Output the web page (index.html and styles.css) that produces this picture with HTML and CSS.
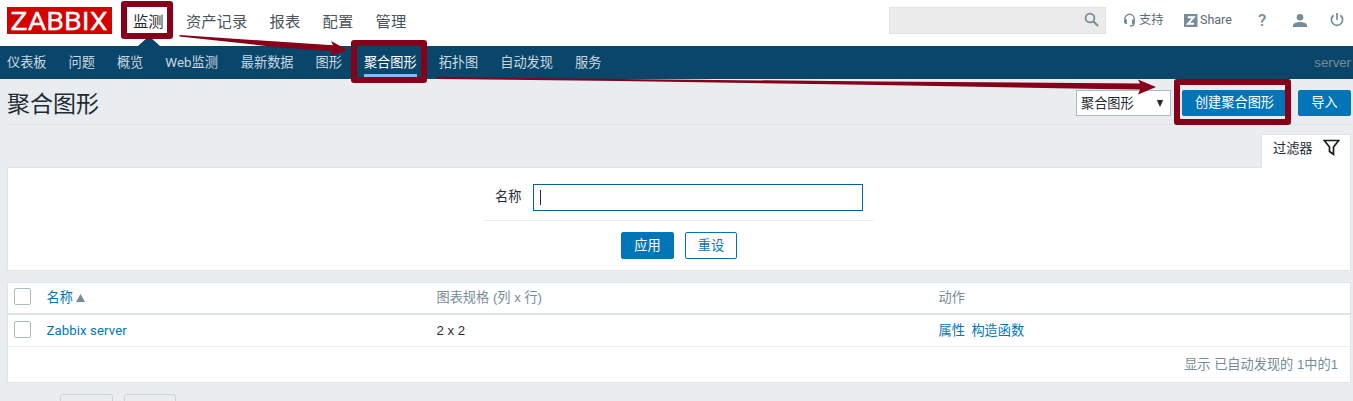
FILE: index.html
```html
<!DOCTYPE html>
<html lang="zh-CN">
<head>
<meta charset="utf-8">
<title>Zabbix</title>
<link rel="stylesheet" href="styles.css">
</head>
<body>
<header class="top">
  <svg class="logo" width="105" height="27" viewBox="0 0 105 27"><rect width="105" height="27" fill="#d40000"/><text class="logo-text" x="3.5" y="22.500" textLength="97" lengthAdjust="spacingAndGlyphs">ZABBIX</text></svg>
  <nav class="main-nav"><a class="current">监测</a><a>资产记录</a><a>报表</a><a>配置</a><a>管理</a></nav>
  <div class="search">
    <svg width="16" height="16" viewBox="0 0 16 16" fill="none" stroke="#768d99"><circle cx="6" cy="6" r="4.4" stroke-width="1.8"/><path d="M9.200 9.200l4.800 4.800" stroke-width="2"/></svg>
  </div>
  <div class="tools">
    <a class="support"><svg width="13" height="14" viewBox="0 0 13 14"><path d="M1.800 9V6a4.700 4.700 0 0 1 9.400 0v3.500q0 3.500-4.200 3.500" fill="none" stroke="#768d99" stroke-width="1.5"/><path d="M1 6.500h3v4.500H2.500L1 9.500zM9 6.500h3v3l-1.500 1.500H9z" fill="#768d99"/></svg>支持</a>
    <a class="share"><svg width="14" height="13" viewBox="0 0 14 13"><rect width="13.500" height="13" fill="#768d99"/><path d="M3.700 3.300h6L4 9.700h6" fill="none" stroke="#fff" stroke-width="1.900"/></svg>Share</a>
    <a class="help">?</a>
    <a class="user"><svg width="14" height="13" viewBox="0 0 14 13" fill="#768d99"><circle cx="7" cy="3.300" r="3.300"/><path d="M0 13v-1.700C0 9 4 7.900 7 7.900s7 1.100 7 3.400V13z"/></svg></a>
    <a class="power"><svg width="14" height="14" viewBox="0 0 14 14" fill="none" stroke="#768d99" stroke-width="1.700"><path d="M7 0v7M3.600 2.300a5.600 5.600 0 1 0 6.800 0"/></svg></a>
  </div>
</header>
<nav class="sub-nav">
  <a>仪表板</a><a>问题</a><a>概览</a><a class="web">Web监测</a><a>最新数据</a><a>图形</a><a class="selected">聚合图形</a><a>拓扑图</a><a>自动发现</a><a>服务</a>
  <span class="server">server</span>
</nav>
<main>
  <div class="title-row">
    <h1>聚合图形</h1>
    <div class="select"><span>聚合图形</span><svg width="8" height="8" viewBox="0 0 8 8"><path d="M.8 0h6.400L4 7z" fill="#1f2c33"/></svg></div>
    <button class="btn create">创建聚合图形</button>
    <button class="btn import">导入</button>
  </div>
  <div class="tab-row">
    <div class="tab">过滤器<svg width="17" height="17" viewBox="0 0 17 17" fill="none" stroke="#1b1b1b" stroke-width="1.700"><path d="M1.300 1.500h14.400L10.500 8v7.300L6.500 12.500V8z"/></svg></div>
  </div>
  <section class="filter">
    <div class="field"><label>名称</label><div class="input"><i class="caret"></i></div></div>
    <div class="actions"><button class="btn">应用</button><button class="btn alt">重设</button></div>
  </section>
  <section class="table">
    <div class="row head"><i class="check"></i><a class="c1">名称<svg width="9" height="8" viewBox="0 0 9 8"><path d="M4.500 0L9 8H0z" fill="#768d99"/></svg></a><span class="c2">图表规格 (列 x 行)</span><span>动作</span></div>
    <div class="row"><i class="check"></i><a class="c1 host">Zabbix server</a><span class="c2">2 x 2</span><a class="prop">属性</a><a>构造函数</a></div>
    <div class="summary">显示 已自动发现的 1中的1</div>
  </section>
  <div class="bulk"><span class="bulk-btn"></span><span class="bulk-btn short"></span></div>
</main>
<svg class="notes" width="1353" height="401" viewBox="0 0 1353 401">
  <g fill="none" stroke="#850018" stroke-width="6" stroke-linejoin="round">
    <rect x="124" y="4" width="46" height="32"/>
    <rect x="354" y="43" width="70" height="37"/>
    <rect x="1177" y="82" width="111" height="40"/>
  </g>
  <g fill="#850018">
    <path d="M179.500 35L333 45.300L331 41L347.500 50L330 56L333 51.200L280 47.500L179.500 36.500z"/>
    <path d="M437 77L620 79L880 81.500L1140 83.500L1138 79.500L1156 87L1138 94.500L1140 89.500L1100 89L880 85L620 81L437 79z"/>
  </g>
</svg>
</body>
</html>
```
FILE: styles.css
```css
* { box-sizing: border-box; }
body { margin: 0; height: 401px; overflow: hidden; background: #e9edf0; color: #1f2c33; font: 13.2px/18px "Liberation Sans", "Noto Sans CJK SC", sans-serif; }
.top { display: flex; height: 46px; padding: 7px 8px 0 7px; background: #fff; }
.logo { overflow: visible; }
.logo-text { font-family: Roboto, sans-serif; font-size: 26.5px; font-weight: 400; line-height: 27px; fill: #fff; stroke: #fff; stroke-width: .3px; }
.main-nav { display: flex; gap: 22.4px; margin-left: 21px; padding-top: 1px; font-size: 15.3px; line-height: 28px; color: #4a5459; white-space: nowrap; }
.current { position: relative; color: #1f2c33; }
.current::after { content: ""; position: absolute; left: 5px; top: 28px; border: 11px solid transparent; border-top: 0; border-bottom: 10px solid #0a466a; }
.search { display: flex; justify-content: flex-end; width: 217px; height: 27px; margin-left: auto; padding: 4px 5px 0 0; background: #ebebeb; border: 1px solid #e0e3e5; }
.tools { display: flex; width: 239px; padding-left: 17px; color: #768d99; font-size: 12.2px; line-height: 26px; }
.tools a { display: flex; align-items: center; height: 26px; white-space: nowrap; }
.tools .support { width: 61px; gap: 3px; color: #5a6b75; }
.tools .share { width: 74px; gap: 2px; color: #5a6b75; font-family: Roboto, sans-serif; font-size: 12.5px; }
.tools .help { width: 35px; font: 500 17px Roboto, sans-serif; }
.user { width: 37px; }
.sub-nav { display: flex; gap: 22px; height: 33px; padding: 0 2px 0 7px; background: #0a466a; color: #c9d8e0; line-height: 34px; white-space: nowrap; }
.sub-nav a { height: 31px; }
.sub-nav .web { width: 53.5px; font-family: Roboto, "Noto Sans CJK SC", sans-serif; font-size: 13.3px; }
.sub-nav .selected { color: #fff; border-bottom: 3px solid #7dbff2; }
.server { margin-left: auto; color: #768d99; }
main { padding: 0 2px 0 7px; }
.title-row { display: flex; height: 46px; padding-top: 11px; border-bottom: 1px solid #dfe4e7; }
h1 { margin: 0 auto 0 0; font-size: 23px; font-weight: 400; line-height: 28px; }
.select { display: flex; align-items: center; justify-content: space-between; width: 95px; height: 26px; padding: 1px 6px 0 4px; border: 1px solid #acbbc2; background: #fff; }
.btn { width: 53px; height: 27px; padding: 0; border: 1px solid #0275b8; border-radius: 2px; background: #0275b8; color: #fff; font: inherit; line-height: 24px; }
.title-row .btn { height: 26px; }
.create { width: 105px; margin: 0 11px; }
.tab-row { display: flex; justify-content: flex-end; height: 42px; padding-top: 9px; }
.tab { display: flex; gap: 10px; width: 90px; height: 34px; padding: 4px 0 0 11px; border: 1px solid #dfe4e7; border-bottom: 0; background: #fff; z-index: 1; line-height: 19px; }
.filter { height: 104px; padding-top: 16px; border: 1px solid #dfe4e7; background: #fff; }
.field { display: flex; width: 390px; height: 37px; margin: 0 auto; padding-left: 11px; border-bottom: 1px solid #ebeef0; }
.field label { width: 38px; line-height: 25px; }
.input { width: 330px; height: 27px; padding: 5px 6px; border: 1px solid #0a6299; }
.caret { display: block; width: 1px; height: 15px; background: #1f2c33; }
.actions { display: flex; justify-content: center; gap: 11px; padding-top: 11px; }
.btn.alt { width: 52px; background: #fff; color: #0275b8; }
.table { margin-top: 11px; height: 101px; border: 1px solid #dfe4e7; background: #fff; }
.row { display: flex; height: 32px; padding: 6px 0 0 6px; border-bottom: 1px solid #ebeef0; line-height: 20px; }
.row.head { height: 32px; padding-top: 5px; color: #768d99; border-bottom: 2px solid #dfe4e7; }
.row a { color: #0275b8; }
.check { width: 17px; height: 17px; margin-right: 15.500px; border: 1px solid #acbbc2; border-radius: 2px; }
.c1 { width: 390px; }
.c1 svg { margin-left: 3px; }
.host { font-family: Roboto, sans-serif; letter-spacing: .1px; }
.c2 { width: 502px; }
.prop { margin-right: 6.500px; }
.summary { padding-right: 12px; text-align: right; color: #768d99; line-height: 36px; }
.bulk { display: flex; gap: 11px; padding: 11px 0 0 53px; }
.bulk-btn { width: 53px; height: 27px; border: 1px solid #ccd5d9; border-radius: 2px; background: #ebebeb; }
.bulk-btn.short { width: 52px; }
.notes { position: absolute; left: 0; top: 0; }
```
